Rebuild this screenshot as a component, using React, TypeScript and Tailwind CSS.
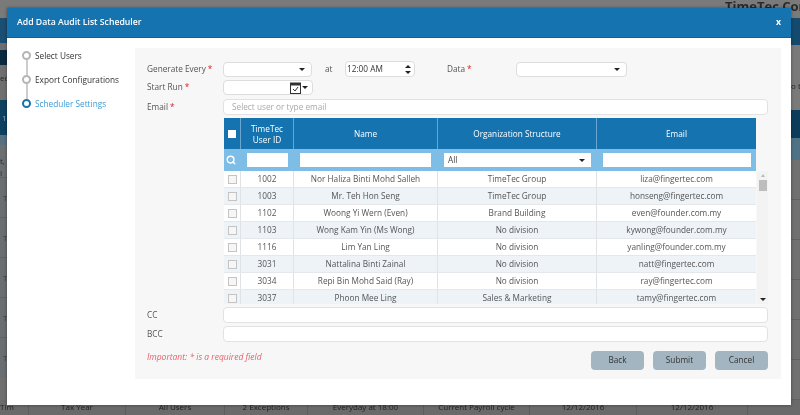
import { Search } from "lucide-react"

const users = [
  ["1002", "Nor Haliza Binti Mohd Salleh", "TimeTec Group", "liza@fingertec.com"],
  ["1003", "Mr. Teh Hon Seng", "TimeTec Group", "honseng@fingertec.com"],
  ["1102", "Woong Yi Wern (Even)", "Brand Building", "even@founder.com.my"],
  ["1103", "Wong Kam Yin (Ms Wong)", "No division", "kywong@founder.com.my"],
  ["1116", "Lim Yan Ling", "No division", "yanling@founder.com.my"],
  ["3031", "Nattalina Binti Zainal", "No division", "natt@fingertec.com"],
  ["3034", "Repi Bin Mohd Said (Ray)", "No division", "ray@fingertec.com"],
  ["3037", "Phoon Mee Ling", "Sales & Marketing", "tamy@fingertec.com"],
]

const columns = "grid grid-cols-[16px_53px_144px_159px_160px]"

const pageRow = ["Tim", "Tax Year", "All Users", "2 Exceptions", "Everyday at 18:00", "Current Payroll cycle", "12/12/2016", "12/12/2016", ""]

function Caret() {
  return <span className="block w-0 h-0 border-x-[3px] border-x-transparent border-t-[3px] border-t-[#222]"></span>
}

function Star() {
  return <span className="text-[#e02020] ml-0.5">*</span>
}

function Select({ className }: { className: string }) {
  return (
    <div className={`h-[15px] bg-white border border-[#ddd] rounded-sm flex items-center justify-end pr-1.5 ${className}`}>
      <Caret />
    </div>
  )
}

function Step({ label, active, last }: { label: string; active?: boolean; last?: boolean }) {
  return (
    <div className="flex gap-1 h-6">
      <div className="flex flex-col items-center w-[9px]">
        <span className={active ? "w-[9px] h-[9px] rounded-full border-2 border-[#1573b0] bg-white" : "w-[9px] h-[9px] rounded-full border-2 border-[#b5b5b5] bg-white"}></span>
        {!last && <span className="w-[2px] flex-1 bg-[#ccc]"></span>}
      </div>
      <span className={active ? "text-[#3d9bd6] leading-[10px]" : "text-[#333] leading-[10px]"}>{label}</span>
    </div>
  )
}

// what shows of the page behind the dialog
function Backdrop() {
  return (
    <div className="h-[415px] bg-[#6f6f6f] flex flex-col text-[8px] text-[#2a2a2a]">
      <div className="h-[18px] bg-[#7a7a7a] pl-[725px] text-[13px] font-bold leading-[13px] whitespace-nowrap overflow-hidden">TimeTec Comp</div>

      <div className="flex-1 flex justify-between">
        <div className="w-[7px] flex flex-col overflow-hidden">
          <div className="h-[25px] bg-[#1a4f73]"></div>
          <div className="h-[7px]"></div>
          <div className="h-[15px] bg-[#0a2a3f]"></div>
          <div className="h-[35px] pt-[7px]">ed</div>
          <div className="h-[35px] bg-[#0e4060] pt-[12px] pl-[2px] text-[#8fa9ba]">1</div>
          <div className="h-[10px] bg-[#56707f]"></div>
          <div className="h-[32px] pt-[10px] bg-[#6b6f72]">t, I</div>
          {[0, 1, 2, 3, 4].map((n) => (
            <div key={n} className="h-[40px] pl-[3px] pt-[14px] bg-[#6a6e71] border-t border-[#5f6366] text-[#3a3a3a]">T</div>
          ))}
        </div>

        <div className="w-[9px] flex flex-col overflow-hidden whitespace-nowrap">
          <div className="h-[27px] bg-[#134a6e]"></div>
          <div className="h-[65px] bg-[#7a7a7a] pt-[35px]">o t</div>
          <div className="h-[28px] bg-[#0c3c5c]"></div>
          <div className="h-[22px] bg-[#4f7386]"></div>
          {[0, 1, 2, 3, 4, 5].map((n) => (
            <div key={n} className="h-[40px] bg-[#707070] border-b border-[#626262]"></div>
          ))}
        </div>
      </div>

      <div className="h-[15px] bg-[#6a6a6a] grid grid-cols-[28px_97px_99px_83px_116px_106px_107px_111px_53px] text-center leading-[14px] text-[#222] whitespace-nowrap overflow-hidden">
        {pageRow.map((cell, i) => (
          <span key={i} className={i === 0 ? "text-left" : "border-l border-[#5c5c5c]"}>{cell}</span>
        ))}
      </div>
    </div>
  )
}

export default function App() {
  return (
    <div className="relative w-[800px] h-[415px] overflow-hidden blur-[0.4px] font-['Open_Sans','Noto_Sans',sans-serif] text-[8.25px]">
      <Backdrop />

      <div className="absolute left-[7px] top-[8px] w-[784px] h-[397px] bg-white flex flex-col shadow-[0_0_3px_rgba(0,0,0,0.4)]">
        <div className="h-[30px] bg-[#1573b0] border-b border-[#0f6197] flex items-center justify-between pl-[10px] pr-2.5 text-white font-semibold text-[8.7px]">
          <span>Add Data Audit List Scheduler</span>
          <span className="font-bold">x</span>
        </div>

        <div className="flex flex-1">
          <div className="w-[128px] pl-[15px] pt-[13px] font-medium">
            <Step label="Select Users" />
            <Step label="Export Configurations" />
            <Step label="Scheduler Settings" active last />
          </div>

          <div className="w-[646px] h-[331px] mt-[10px] bg-[#f7f7f7] pl-3 pr-[13px] pt-[13px] text-[#555]">
            <div className="flex items-center h-[16px]">
              <span className="w-[76px]">Generate Every<Star /></span>
              <Select className="w-[89px]" />
              <span className="ml-[13px] w-[20px]">at</span>
              <div className="w-[70px] h-[16px] bg-white border border-[#ddd] rounded-sm flex items-center justify-between pl-px pr-[3px] text-[#333]">
                <span>12:00 AM</span>
                <span className="flex flex-col gap-[3px]">
                  <span className="block w-0 h-0 border-x-[3px] border-x-transparent border-b-[3px] border-b-[#222]"></span>
                  <Caret />
                </span>
              </div>
              <span className="ml-[32px] w-[69px]">Data<Star /></span>
              <Select className="w-[111px]" />
            </div>

            <div className="flex items-center h-[15px] mt-[3px]">
              <span className="w-[76px]">Start Run<Star /></span>
              <div className="w-[90px] h-[15px] bg-white border border-[#ddd] rounded-sm flex items-center justify-end gap-px pr-1">
                <svg width="11" height="12" viewBox="0 0 11 12" fill="none" stroke="#333">
                  <rect x="0.5" y="1.5" width="10" height="10" />
                  <rect x="0.5" y="1" width="10" height="2" fill="#333" />
                  <path d="M3 7l2 2 3-4" />
                </svg>
                <Caret />
              </div>
            </div>

            <div className="flex items-center h-[16px] mt-[4px]">
              <span className="w-[76px]">Email<Star /></span>
              <div className="w-[545px] h-[16px] bg-white border border-[#e2e2e2] rounded-sm pl-2 leading-[14px] text-[#aaa]">Select user or type email</div>
            </div>

            <div className="flex mt-[3px] ml-[77px] h-[186px]">
              <div className="w-[532px] overflow-hidden">
                <div className={`${columns} h-[31px] bg-[#1573b0] text-white font-medium text-center leading-[11px]`}>
                  <div className="flex items-center justify-center">
                    <span className="w-2 h-2 bg-white"></span>
                  </div>
                  <div className="border-l border-[#6aa6cf] flex items-center justify-center">TimeTec<br />User ID</div>
                  <div className="border-l border-[#6aa6cf] flex items-center justify-center">Name</div>
                  <div className="border-l border-[#6aa6cf] flex items-center justify-center">Organization Structure</div>
                  <div className="border-l border-[#6aa6cf] flex items-center justify-center">Email</div>
                </div>

                <div className={`${columns} h-[22px] bg-[#7dbde6] items-center`}>
                  <Search size={10} strokeWidth={3.5} className="text-white ml-[2px]" />
                  <div className="h-[14px] bg-white ml-[7px] mr-[5px]"></div>
                  <div className="h-[14px] bg-white ml-[7px] mr-[6px]"></div>
                  <div className="h-[14px] bg-white ml-[7px] mr-[5px] flex items-center justify-between pl-1 pr-1.5 text-[#444]">
                    All
                    <Caret />
                  </div>
                  <div className="h-[14px] bg-white ml-[7px] mr-[5px]"></div>
                </div>

                {users.map((u, i) => (
                  <div key={u[0]} className={`${columns} h-[17px] leading-[16px] text-center text-[#555] border-b border-[#e4e8ea] ${i % 2 ? "bg-[#edf3f7]" : "bg-white"}`}>
                    <div className="flex items-center justify-center">
                      <span className="w-[9px] h-[9px] border border-[#c4c4c4] bg-[#f6f6f6]"></span>
                    </div>
                    <div className="border-l border-[#dfe3e6]">{u[0]}</div>
                    <div className="border-l border-[#dfe3e6]">{u[1]}</div>
                    <div className="border-l border-[#dfe3e6]">{u[2]}</div>
                    <div className="border-l border-[#dfe3e6]">{u[3]}</div>
                  </div>
                ))}
              </div>

              <div className="w-[11px] ml-px mt-[53px] h-[133px] bg-[#f3f3f3] flex flex-col items-center pt-[3px]">
                <span className="block w-0 h-0 border-x-[2px] border-x-transparent border-b-[3px] border-b-[#bbb]"></span>
                <span className="w-[8px] h-[11px] mt-[3px] bg-[#bdbdbd]"></span>
                <span className="mt-auto mb-[3px]"><Caret /></span>
              </div>
            </div>

            <div className="flex items-center h-[16px] mt-[3px]">
              <span className="w-[76px]">CC</span>
              <div className="w-[545px] h-[16px] bg-white border border-[#e2e2e2] rounded-sm"></div>
            </div>
            <div className="flex items-center h-[16px] mt-[3px]">
              <span className="w-[76px]">BCC</span>
              <div className="w-[545px] h-[16px] bg-white border border-[#e2e2e2] rounded-sm"></div>
            </div>

            <div className="flex items-start justify-between mt-[9px] w-[621px]">
              <span className="italic text-[#e8606a] text-[8.5px]">Important: * is a required field</span>
              <div className="flex gap-[9px] text-[#333]">
                <button className="w-[53px] h-[19px] bg-[#a3b5c1] rounded-sm">Back</button>
                <button className="w-[53px] h-[19px] bg-[#a3b5c1] rounded-sm">Submit</button>
                <button className="w-[53px] h-[19px] bg-[#a3b5c1] rounded-sm">Cancel</button>
              </div>
            </div>
          </div>
        </div>
      </div>
    </div>
  )
}
